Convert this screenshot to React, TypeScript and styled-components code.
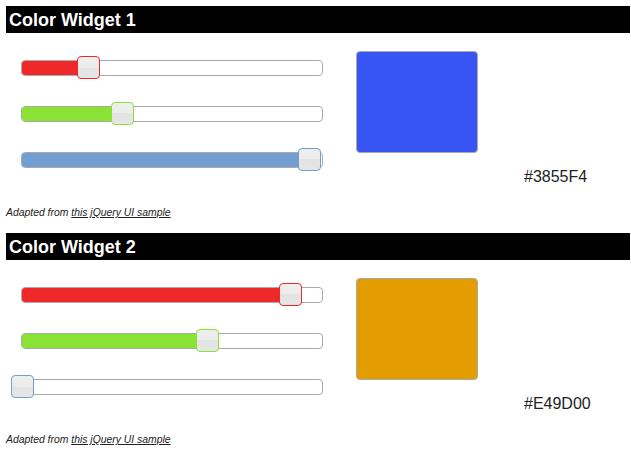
import React from 'react';
import styled, {createGlobalStyle} from "styled-components";

interface I_Widget {
    title: string
    red: number
    green: number
    blue: number
}

const widgets: I_Widget[] = [
    { title: 'Color Widget 1', red: 0x38, green: 0x55, blue: 0xF4 },
    { title: 'Color Widget 2', red: 0xE4, green: 0x9D, blue: 0x00 },
];

const channels = [
    { key: 'red', color: '#ef2929' },
    { key: 'green', color: '#8ae234' },
    { key: 'blue', color: '#729fcf' },
] as const;

const toHex = (w: I_Widget) =>
    '#' + [w.red, w.green, w.blue].map(v => v.toString(16).toUpperCase().padStart(2, '0')).join('');

const Slider: React.FC<{ value: number, color: string }> = ({value, color}) => {
    const pct = (value / 255) * 100;
    return (
        <Track>
            <Range $color={color} style={{ width: pct + '%' }}/>
            <Handle $color={color} style={{ left: pct + '%' }}/>
        </Track>
    );
};

const ColorWidget: React.FC<{ widget: I_Widget }> = ({widget}) => {
    const hex = toHex(widget);
    return (
        <Widget>
            <Header>{widget.title}</Header>
            <Body>
                <Sliders>
                    {channels.map(c => (
                        <Slider key={c.key} value={widget[c.key]} color={c.color}/>
                    ))}
                </Sliders>
                <Output>
                    <Swatch $color={hex}/>
                    <HexLabel>{hex}</HexLabel>
                </Output>
            </Body>
            <Footer>
                Adapted from <a href="#">this jQuery UI sample</a>
            </Footer>
        </Widget>
    );
};

const App: React.FC = () => {
    return (
        <>
            <GlobalStyle/>
            <Page>
                {widgets.map(w => <ColorWidget key={w.title} widget={w}/>)}
            </Page>
        </>
    );
};

export default App;

const GlobalStyle = createGlobalStyle`
    body {
        margin: 0;
        background: #fff;
        font-family: "Liberation Sans", Arial, sans-serif;
        color: #222;
    }
`;

const Page = styled.div`
    padding: 6px 1px 0 6px;
`;

const Widget = styled.section`
    margin-bottom: 14px;
`;

const Header = styled.h2`
    margin: 0;
    height: 27px;
    line-height: 28px;
    padding-left: 3px;
    background: #000;
    color: #fff;
    font-size: 18px;
    font-weight: bold;
`;

const Body = styled.div`
    display: flex;
    align-items: flex-start;
`;

const Sliders = styled.div`
    width: 302px;
    padding: 27px 33px 0 15px;
    display: flex;
    flex-direction: column;
    gap: 30px;
`;

const Track = styled.div`
    position: relative;
    height: 14px;
    border: 1px solid #aaa;
    border-radius: 4px;
    background: #fff;
`;

const Range = styled.div<{ $color: string }>`
    position: absolute;
    left: 0;
    top: 0;
    height: 100%;
    background: ${p => p.$color};
    border-radius: 3px 0 0 3px;
`;

const Handle = styled.div<{ $color: string }>`
    position: absolute;
    top: -5px;
    width: 21px;
    height: 21px;
    margin-left: -11px;
    border: 1px solid ${p => p.$color};
    border-radius: 4px;
    background: linear-gradient(#eeeeee 0%, #ececec 50%, #e3e3e3 50%, #e6e6e6 100%);
`;

const Output = styled.div`
    display: flex;
    flex-direction: column;
    padding-top: 18px;
`;

const Swatch = styled.div<{ $color: string }>`
    width: 120px;
    height: 100px;
    border: 1px solid #aaa;
    border-radius: 4px;
    background: ${p => p.$color};
`;

const HexLabel = styled.div`
    margin: 15px 0 0 168px;
    font-size: 16px;
    line-height: 18px;
    color: #222;
`;

const Footer = styled.div`
    margin-top: 21px;
    font-size: 10.4px;
    line-height: 12px;
    font-style: italic;
    color: #222;

    a {
        color: #222;
        text-decoration: underline;
    }
`;
